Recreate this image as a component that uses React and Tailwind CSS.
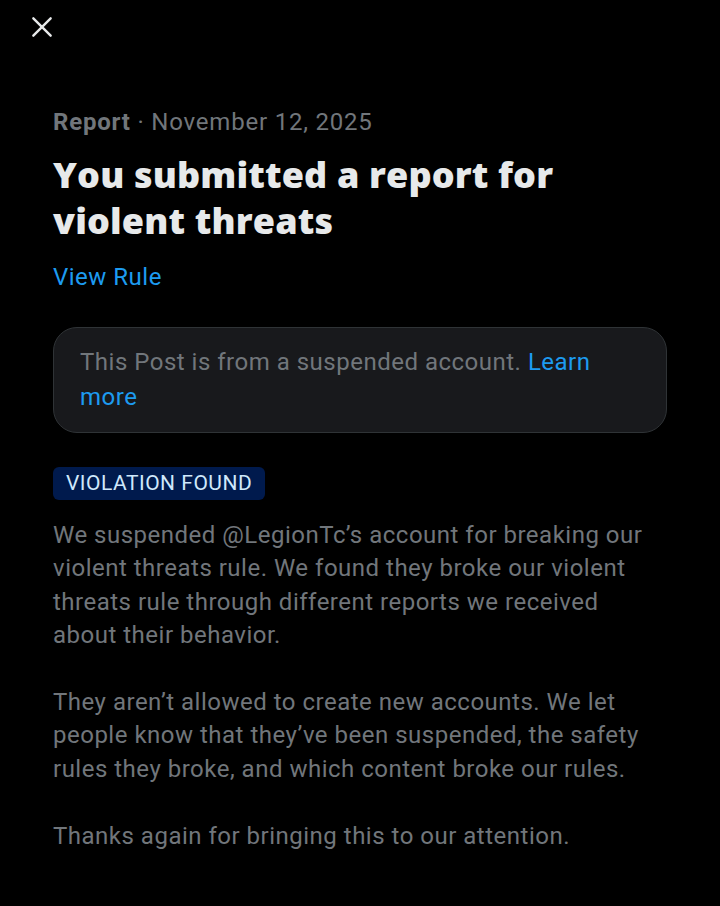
import React from "react"

function CloseIcon() {
  return (
    <svg viewBox="0 0 24 24" className="w-[26px] h-[26px]" fill="none" stroke="#e7e9ea" strokeWidth="2.2" strokeLinecap="round">
      <path d="M4 4L20 20M20 4L4 20" />
    </svg>
  )
}

export default function App() {
  return (
    <div className="min-h-[906px] w-full bg-black text-[#e7e9ea]" style={{ fontFamily: "Roboto, 'Noto Sans', sans-serif" }}>
      <div className="pl-[29px] pt-[14px]">
        <button className="block">
          <CloseIcon />
        </button>
      </div>

      <div className="px-[53px] pt-[67px]">
        <div className="text-[24px] leading-[30px] tracking-[0.8px] text-[#71767b]">
          <span className="font-bold">Report</span>
          <span> · November 12, 2025</span>
        </div>

        <h1
          className="mt-[15px] text-[36px] leading-[46px] font-extrabold tracking-[0.15px] text-[#e7e9ea]"
          style={{ fontFamily: "'Open Sans', Roboto, sans-serif" }}
        >
          You submitted a report for violent threats
        </h1>

        <a className="block mt-[18px] text-[24px] leading-[30px] tracking-[0.5px] text-[#1d9bf0]">View Rule</a>

        <div className="mt-[35px] rounded-[24px] border border-[#2f3336] bg-[#18191c] px-[26px] pt-[17px] pb-[17px] text-[24px] leading-[35px] tracking-[0.5px] text-[#71767b]">
          This Post is from a suspended account. <a className="text-[#1d9bf0]">Learn more</a>
        </div>

        <div className="mt-[34px]">
          <span className="inline-block rounded-[6px] bg-[#001a4d] px-[13px] text-[21px] leading-[33px] tracking-[0.5px] text-[#cfe8fc]">
            VIOLATION FOUND
          </span>
        </div>

        <div className="mt-[19px] text-[24px] leading-[33.4px] tracking-[0.5px] text-[#71767b]">
          <p>
            We suspended @LegionTc’s account for breaking our violent threats rule. We found they broke our violent
            threats rule through different reports we received about their behavior.
          </p>
          <p className="mt-[33.4px]">
            They aren’t allowed to create new accounts. We let people know that they’ve been suspended, the safety
            rules they broke, and which content broke our rules.
          </p>
          <p className="mt-[33.4px]">Thanks again for bringing this to our attention.</p>
        </div>
      </div>
    </div>
  )
}
